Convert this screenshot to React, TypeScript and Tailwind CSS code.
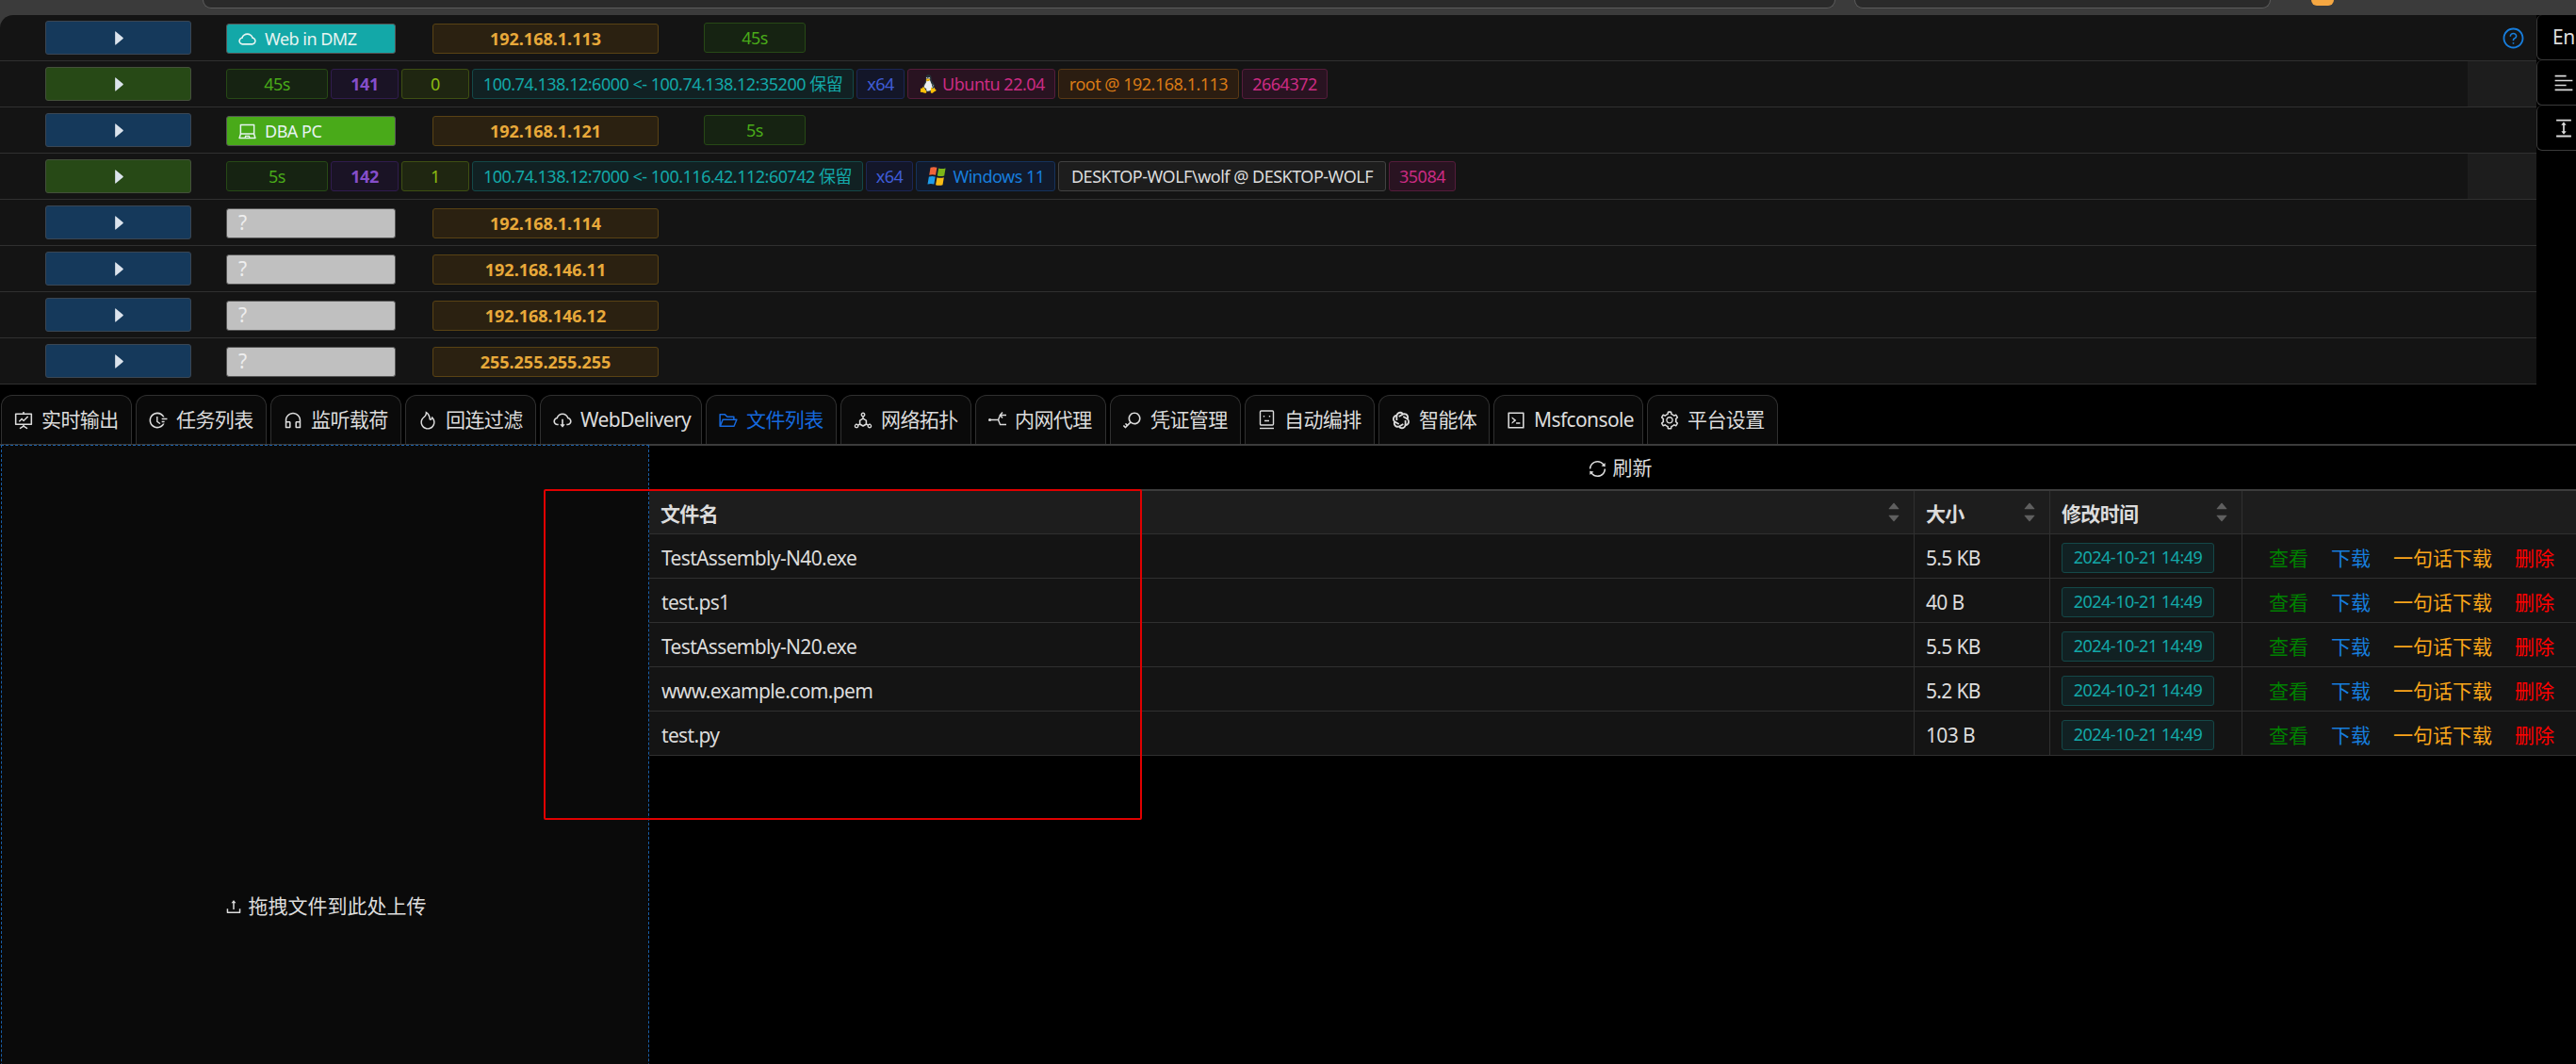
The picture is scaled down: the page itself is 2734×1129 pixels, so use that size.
import React from "react";
import {
  AiFillCaretDown,
  AiFillCaretRight,
  AiFillCaretUp,
  AiOutlineAlignLeft,
  AiOutlineCloud,
  AiOutlineCloudDownload,
  AiOutlineCode,
  AiOutlineColumnHeight,
  AiOutlineCustomerService,
  AiOutlineDeploymentUnit,
  AiOutlineFieldTime,
  AiOutlineFire,
  AiOutlineFolderOpen,
  AiOutlineFundProjectionScreen,
  AiOutlineKey,
  AiOutlineLaptop,
  AiOutlineQuestionCircle,
  AiOutlineSetting,
  AiOutlineSync,
  AiOutlineUpload,
} from "react-icons/ai";
import { FcLinux } from "react-icons/fc";
import { RiOpenaiLine } from "react-icons/ri";

const FONT = "font-['Noto_Sans','Noto_Sans_CJK_SC',sans-serif]";

const RobotFace = () => (
  <svg width="21" height="21" viewBox="0 0 21 21" fill="none" stroke="currentColor" strokeWidth="1.4">
    <rect x="3.5" y="1" width="14" height="15" rx="1" />
    <path d="M3 19.5h15" />
    <path d="M7.5 6v1.5M13.5 6v1.5M8 11.500h5" />
  </svg>
);

const ProxyFork = () => (
  <svg width="21" height="21" viewBox="0 0 21 21" fill="none" stroke="currentColor" strokeWidth="1.4">
    <circle cx="2.500" cy="10.500" r="1.500" fill="currentColor" stroke="none" />
    <path d="M3 10.500h8.500l2-5H20" />
    <path d="M11.500 10.500l2 5H20" />
    <path d="M16 2.500l-2.500 3 2.500 3" />
  </svg>
);

const WindowsLogo = () => (
  <svg width="24" height="24" viewBox="0 0 21 21">
    <path d="M4 2.500c2-.8 4-.8 6 0l-1.200 7c-2-.8-4-.8-6 0z" fill="#f0653a" />
    <path d="M11.500 3c2 .8 4 .8 6.500 0l-1.200 7c-2.400.8-4.500.8-6.500 0z" fill="#7cb518" />
    <path d="M2.500 11c2-.8 4-.8 6 0l-1.200 7c-2-.8-4-.8-6 0z" fill="#1e9be8" />
    <path d="M10 11.500c2 .8 4.200.8 6.500 0l-1.200 7c-2.300.8-4.500.8-6.500 0z" fill="#f8bc15" />
  </svg>
);

const tone = {
  gold: "bg-[#2b2111] border-[#594214] text-[#e8a93a] font-bold tracking-normal",
  green: "bg-[#162312] border-[#274916] text-[#49aa19] tracking-[-0.5px]",
  purple: "bg-[#1a1325] border-[#301c4d] text-[#854eca] font-bold tracking-[-0.5px]",
  lime: "bg-[#1f2611] border-[#3e4f13] text-[#8bbb11] tracking-[-0.5px]",
  cyan: "bg-[#112123] border-[#144848] text-[#13a8a8] tracking-[-0.5px]",
  geek: "bg-[#131629] border-[#1c2755] text-[#3f5cd6] tracking-[-0.5px]",
  magenta: "bg-[#291321] border-[#551c3b] text-[#cb2b83] tracking-[-0.5px]",
  orange: "bg-[#2b1d11] border-[#593815] text-[#d87a16] tracking-[-0.5px]",
  blue: "bg-[#111a2c] border-[#15325b] text-[#177ddc] tracking-[-0.5px]",
  plain: "bg-[#1d1d1d] border-[#424242] text-[#dcdcdc] tracking-[-0.5px]",
};

type TagProps = { kind: keyof typeof tone; className: string; children: React.ReactNode };

const Tag = ({ kind, className, children }: TagProps) => (
  <span
    className={`flex h-8 shrink-0 items-center justify-center gap-[4px] whitespace-nowrap rounded-[3px] border text-[18px] ${tone[kind]} ${className}`}
  >
    {children}
  </span>
);

const Arrow = ({ session }: { session?: boolean }) => (
  <div
    className={`ml-12 flex h-9 w-[155px] shrink-0 items-center justify-center rounded-[3px] border pl-[2px] text-[#dbe3ec] ${
      session ? "border-[#44503b] bg-[#274916]" : "border-[#3a4653] bg-[#15395b]"
    }`}
  >
    <AiFillCaretRight size={21} />
  </div>
);

const Label = ({ bg, icon, text }: { bg: string; icon: React.ReactNode; text?: string }) => (
  <span
    className={`ml-[37px] mt-[2px] flex h-8 w-[180px] shrink-0 items-center gap-[8px] rounded-[3px] border border-[#555] pl-[11px] text-[18px] tracking-[-0.5px] text-[#e6f4f1] ${bg}`}
  >
    {icon}
    {text}
  </span>
);

const HostRow = ({ label, ip, heartbeat, help }: { label: React.ReactNode; ip: string; heartbeat?: string; help?: boolean }) => (
  <div className="flex h-[49px] items-center border-b border-[#303030]">
    <Arrow />
    {label}
    <Tag kind="gold" className="ml-[39px] mt-[2px] w-[240px]">
      {ip}
    </Tag>
    {heartbeat && (
      <Tag kind="green" className="ml-12 w-[108px]">
        {heartbeat}
      </Tag>
    )}
    {help && <AiOutlineQuestionCircle size={25} className="ml-auto mr-[12px] text-[#177ddc]" />}
  </div>
);

const SessionRow = ({ children }: { children: React.ReactNode }) => (
  <div className="flex h-[49px] items-center border-b border-[#303030]">
    <Arrow session />
    <div className="ml-[37px] flex items-center gap-[3px]">{children}</div>
    <div className="ml-auto h-full w-[73px] bg-[#1d1d1d]" />
  </div>
);

const tabs = [
  { name: "实时输出", icon: <AiOutlineFundProjectionScreen size={22} />, width: "w-[139px]" },
  { name: "任务列表", icon: <AiOutlineFieldTime size={22} />, width: "w-[139px]" },
  { name: "监听载荷", icon: <AiOutlineCustomerService size={22} />, width: "w-[139px]" },
  { name: "回连过滤", icon: <AiOutlineFire size={22} />, width: "w-[139px]" },
  { name: "WebDelivery", icon: <AiOutlineCloudDownload size={22} />, width: "w-[172px]" },
  { name: "文件列表", icon: <AiOutlineFolderOpen size={22} />, width: "w-[139px]", active: true },
  { name: "网络拓扑", icon: <AiOutlineDeploymentUnit size={22} />, width: "w-[139px]" },
  { name: "内网代理", icon: <ProxyFork />, width: "w-[139px]" },
  { name: "凭证管理", icon: <AiOutlineKey size={22} />, width: "w-[139px]" },
  { name: "自动编排", icon: <RobotFace />, width: "w-[138px]" },
  { name: "智能体", icon: <RiOpenaiLine size={22} />, width: "w-[118px]" },
  { name: "Msfconsole", icon: <AiOutlineCode size={22} />, width: "w-[159px]" },
  { name: "平台设置", icon: <AiOutlineSetting size={22} />, width: "w-[139px]" },
];

const files = [
  { name: "TestAssembly-N40.exe", size: "5.5 KB" },
  { name: "test.ps1", size: "40 B" },
  { name: "TestAssembly-N20.exe", size: "5.5 KB" },
  { name: "www.example.com.pem", size: "5.2 KB" },
  { name: "test.py", size: "103 B" },
];

const SortHeader = ({ title, className }: { title: string; className: string }) => (
  <div className={`flex h-full items-center justify-between border-r border-[#303030] pl-[12px] pr-[13px] font-bold ${className}`}>
    <span className="pt-[4px]">{title}</span>
    <span className="flex flex-col text-[#5f5f5f]">
      <AiFillCaretUp size={16} className="-mb-[3px]" />
      <AiFillCaretDown size={16} />
    </span>
  </div>
);

const FileTable = () => (
  <div className="border-t-2 border-[#3c3c3c] text-[21px] tracking-[-0.65px] text-[#dcdcdc]">
    <div className="flex h-[46px] border-b border-[#303030] bg-[#1d1d1d]">
      <SortHeader title="文件名" className="w-[1343px]" />
      <SortHeader title="大小" className="w-[144px]" />
      <SortHeader title="修改时间" className="w-[204px]" />
    </div>
    {files.map((file) => (
      <div key={file.name} className="flex h-[47px] items-center border-b border-[#303030] bg-[#141414]">
        <div className="flex h-full w-[1343px] items-center border-r border-[#303030] pl-[13px] pt-[5px]">{file.name}</div>
        <div className="flex h-full w-[144px] items-center border-r border-[#303030] pl-[12px] pt-[5px]">{file.size}</div>
        <div className="flex h-full w-[204px] items-center border-r border-[#303030] pl-[12px]">
          <Tag kind="cyan" className="mt-[3px] w-[162px]">
            2024-10-21 14:49
          </Tag>
        </div>
        <div className="flex gap-[24px] pl-[28px] pt-[5px] tracking-normal">
          <span className="text-[#008000]">查看</span>
          <span className="text-[#177ddc]">下载</span>
          <span className="text-[#faa61a]">一句话下载</span>
          <span className="text-[#ff0000]">删除</span>
        </div>
      </div>
    ))}
  </div>
);

const SideButton = ({ children }: { children: React.ReactNode }) => (
  <div className="flex h-12 items-center rounded-l-[6px] border-b border-l border-[#3a3a3a] pl-[16px] text-[21px] tracking-[-0.5px] text-[#dcdcdc]">
    {children}
  </div>
);

export default function App() {
  return (
    <div className={`relative h-[1129px] overflow-hidden bg-black ${FONT}`}>
      {/* browser edge */}
      <div className="relative h-4 bg-[#3b3b3b]">
        <div className="absolute left-[215px] top-0 h-[9px] w-[1733px] rounded-b-[14px] border-b border-l border-r border-[#5c5c5c] bg-[#2a2a2a]" />
        <div className="absolute left-[1968px] top-0 h-[9px] w-[442px] rounded-b-[14px] border-b border-l border-r border-[#5c5c5c] bg-[#2a2a2a]" />
        <div className="absolute left-[2453px] top-0 h-[6px] w-6 rounded-b-[6px] bg-[#f5a742]" />
      </div>

      <div className="flex h-[392px]">
        <div className="relative w-[2692px] bg-[#3b3b3b]">
          <div className="overflow-hidden rounded-tl-[14px] bg-[#141414]">
            <HostRow
              label={<Label bg="bg-[#13a8a8]" icon={<AiOutlineCloud size={21} />} text="Web in DMZ" />}
              ip="192.168.1.113"
              heartbeat="45s"
              help
            />
            <SessionRow>
              <Tag kind="green" className="w-[108px]">45s</Tag>
              <Tag kind="purple" className="w-[72px]">141</Tag>
              <Tag kind="lime" className="w-[72px]">0</Tag>
              <Tag kind="cyan" className="w-[405px]">100.74.138.12:6000 &lt;- 100.74.138.12:35200 保留</Tag>
              <Tag kind="geek" className="w-[51px]">x64</Tag>
              <Tag kind="magenta" className="w-[157px]"><FcLinux size={26} className="-mx-[2px]" />Ubuntu 22.04</Tag>
              <Tag kind="orange" className="w-[192px]">root @ 192.168.1.113</Tag>
              <Tag kind="magenta" className="w-[91px]">2664372</Tag>
            </SessionRow>
            <HostRow
              label={<Label bg="bg-[#49aa19]" icon={<AiOutlineLaptop size={21} />} text="DBA PC" />}
              ip="192.168.1.121"
              heartbeat="5s"
            />
            <SessionRow>
              <Tag kind="green" className="w-[108px]">5s</Tag>
              <Tag kind="purple" className="w-[72px]">142</Tag>
              <Tag kind="lime" className="w-[72px]">1</Tag>
              <Tag kind="cyan" className="w-[415px]">100.74.138.12:7000 &lt;- 100.116.42.112:60742 保留</Tag>
              <Tag kind="geek" className="w-[50px]">x64</Tag>
              <Tag kind="blue" className="w-[148px]"><WindowsLogo />Windows 11</Tag>
              <Tag kind="plain" className="w-[348px]">DESKTOP-WOLF\wolf @ DESKTOP-WOLF</Tag>
              <Tag kind="magenta" className="w-[71px]">35084</Tag>
            </SessionRow>
            {["192.168.1.114", "192.168.146.11", "192.168.146.12", "255.255.255.255"].map((ip) => (
              <HostRow key={ip} label={<Label bg="bg-[#c0c0c0]" icon={<span className="pl-[1px] text-[21px] text-[#eeeeee]">?</span>} />} ip={ip} />
            ))}
          </div>
        </div>
        <div className="w-[42px] bg-black">
          <SideButton>En</SideButton>
          <SideButton><AiOutlineAlignLeft size={24} /></SideButton>
          <SideButton><AiOutlineColumnHeight size={24} /></SideButton>
        </div>
      </div>

      {/* tab bar */}
      <div className="mt-[11px] flex h-[54px] gap-[4px] border-b-2 border-[#3c3c3c] pl-[1px]">
        {tabs.map((tab) => (
          <div
            key={tab.name}
            className={`flex h-[52px] shrink-0 items-center gap-[8px] rounded-t-[12px] border border-b-0 border-[#303030] bg-[#0a0a0a] pl-[12px] text-[21px] tracking-[-0.6px] ${tab.width} ${
              tab.active ? "text-[#1668dc]" : "text-[#dcdcdc]"
            }`}
          >
            {tab.icon}
            <span className="whitespace-nowrap">{tab.name}</span>
          </div>
        ))}
      </div>

      <div className="flex">
        {/* upload area */}
        <div className="-mt-[1px] ml-[1px] flex h-[980px] w-[688px] shrink-0 items-center justify-center border border-dashed border-[#1a5fa8] bg-[#0a0a0a] text-[21px] text-[#dcdcdc]">
          <AiOutlineUpload size={20} className="mr-[6px]" />
          拖拽文件到此处上传
        </div>
        <div className="min-w-0 flex-1">
          <div className="flex h-[46px] items-center justify-center gap-[6px] pl-[15px] pt-[2px] text-[21px] text-[#dcdcdc]">
            <AiOutlineSync size={21} />
            刷新
          </div>
          <FileTable />
        </div>
      </div>

      {/* red annotation around the table's first column */}
      <div className="absolute left-[577px] top-[519px] h-[351px] w-[635px] rounded-[2px] border-2 border-[#e00000]" />
    </div>
  );
}
